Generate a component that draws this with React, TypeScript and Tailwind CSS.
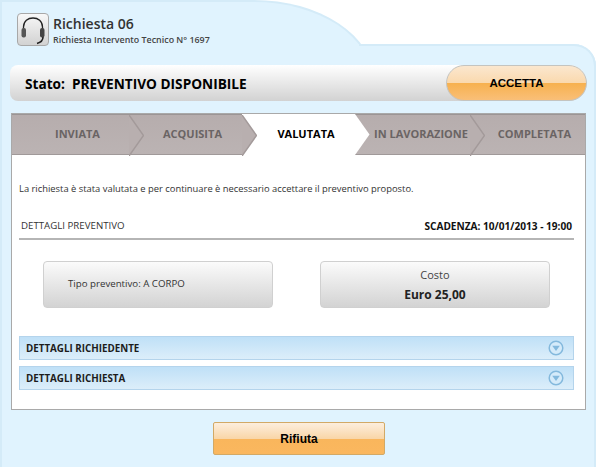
const Headset = () => (
  <svg width="30" height="30" viewBox="0 0 30 30" fill="none">
    <path d="M5.5 16 V12 C5.5 6 10 3 15 3 C20 3 24.5 6 24.5 12 V16" stroke="#222" strokeWidth="1.3" />
    <rect x="3.5" y="13" width="4.5" height="9.5" rx="2" fill="#555" />
    <rect x="22" y="13" width="4.5" height="9.5" rx="2" fill="#444" />
    <path d="M25 22 C25 25.5 22.5 27.5 19 28.5" stroke="#222" strokeWidth="1.6" />
  </svg>
)

const Step = ({ label, width, active, last }: { label: string; width: string; active?: boolean; last?: boolean }) => (
  <div
    className={
      "relative flex h-full items-center justify-center text-[11px] font-bold " +
      width +
      (active
        ? " bg-white text-black"
        : " border-y border-t-[#9b9595] border-b-[#a09999] bg-gradient-to-b from-[#b6adad] to-[#bbb3b3] text-[#6a6464]")
    }
  >
    {label}
    {!last && (
      <svg className="absolute left-full top-0 z-10" width="15" height="41" viewBox="0 0 15 41">
        <polygon points="0,0 14.5,20.5 0,41" fill={active ? "#ffffff" : "#b8afaf"} />
        {!active && <polyline points="0,0 14.5,20.5 0,41" fill="none" stroke="#a39a9a" strokeWidth="1.5" />}
      </svg>
    )}
  </div>
)

const Accordion = ({ title }: { title: string }) => (
  <div className="flex h-[24px] items-center justify-between border border-[#b4d4ec] bg-gradient-to-b from-[#bfe0f7] to-[#dceefa] pl-[6px] pr-[9px] text-[9.8px] font-bold text-[#1c1c1c]">
    <span className="pt-[2px]">{title}</span>
    <svg width="16" height="16" viewBox="0 0 16 16">
      <circle cx="8" cy="8" r="6.8" fill="#d5ebfa" stroke="#84b9dd" strokeWidth="1.5" />
      <polygon points="4.2,5.8 11.8,5.8 8,11" fill="#84b9dd" />
    </svg>
  </div>
)

export default function App() {
  return (
    <div className="h-[467px] w-[596px] overflow-hidden bg-white font-['Open_Sans',sans-serif] text-[#222]">
      <div className="-mb-[36px] flex h-[80px] w-[374px] items-start rounded-tr-[120px_80px] border-l-2 border-r-2 border-t-2 border-[#d4ebf8] bg-[#e0f3fe] pl-[15px] pt-[11px]">
        <div className="relative z-10 flex h-[33px] w-[32px] shrink-0 items-center justify-center rounded-[4px] border border-[#a8a8a8] bg-gradient-to-b from-[#f8f8f8] to-[#d2d2d2]">
          <Headset />
        </div>
        <div className="relative z-10 ml-[4px] pt-[1px]">
          <div className="text-[14px] leading-[19px] font-semibold text-[#333]">Richiesta 06</div>
          <div className="text-[8.9px] leading-[13px] font-semibold text-[#444]">Richiesta Intervento Tecnico N° 1697</div>
        </div>
      </div>

      <div className="relative h-[423px] rounded-tr-[22px] border-x-2 border-[#d4ebf8] bg-[#e0f3fe] pl-[9px] pt-[21px]">
        <div className="absolute left-[357px] -right-[2px] top-0 h-[22px] rounded-tr-[22px] border-r-2 border-t-2 border-[#d4ebf8]"></div>

        <div className="-ml-[1px] flex h-[36px] w-[577px] items-center justify-between rounded-l-[8px] rounded-r-[18px] bg-gradient-to-b from-white to-[#d2d2d2]">
          <div className="pl-[15px] pt-[3px] text-[13.65px] font-bold text-black">Stato:&nbsp; PREVENTIVO DISPONIBILE</div>
          <div className="flex h-[36px] w-[141px] items-center justify-center rounded-[18px] border border-[#c4c4c0] bg-[linear-gradient(#fbe7cf_0%,#fad9ae_49%,#f7b14f_51%,#f9bf78_100%)] pt-[1px] font-['Liberation_Sans',sans-serif] text-[11.5px] font-bold text-black">
            ACCETTA
          </div>
        </div>

        <div className="mt-[12px] h-[297px] w-[575px] border border-[#a9a9a9] bg-white">
          <div className="flex h-[41px]">
            <Step label="INVIATA" width="w-[117px] pl-[14px]" />
            <Step label="ACQUISITA" width="w-[113px] pl-[14px]" />
            <Step label="VALUTATA" width="w-[113px] pl-[15px]" active />
            <Step label="IN LAVORAZIONE" width="w-[115px] pl-[17px]" />
            <Step label="COMPLETATA" width="w-[115px] pl-[14px]" last />
          </div>

          <div className="px-[7px]">
            <p className="mt-[27px] text-[9.4px] leading-[14px] text-[#333]">
              La richiesta è stata valutata e per continuare è necessario accettare il preventivo proposto.
            </p>
            <div className="mt-[23px] flex h-[21px] w-[555px] items-start justify-between border-b-2 border-[#b5b5b5] px-[2px] text-[9.7px] leading-[14px]">
              <span className="text-[#333]">DETTAGLI PREVENTIVO</span>
              <span className="text-[10.1px] font-bold text-[#111]">SCADENZA: 10/01/2013 - 19:00</span>
            </div>

            <div className="mt-[21px] flex pl-[24px]">
              <div className="flex h-[47px] w-[230px] items-center rounded-[4px] border border-[#d0d0d0] bg-gradient-to-b from-[#fbfbfb] to-[#d3d3d3] pl-[24px] text-[9.7px] text-[#333]">
                Tipo preventivo: A CORPO
              </div>
              <div className="ml-[47px] flex h-[47px] w-[230px] flex-col items-center justify-center rounded-[4px] border border-[#d0d0d0] bg-gradient-to-b from-[#fbfbfb] to-[#d3d3d3]">
                <span className="text-[11px] leading-[20px] text-[#444]">Costo</span>
                <span className="text-[12px] leading-[20px] font-bold text-[#222]">Euro 25,00</span>
              </div>
            </div>

            <div className="mt-[28px] flex w-[555px] flex-col gap-[6px]">
              <Accordion title="DETTAGLI RICHIEDENTE" />
              <Accordion title="DETTAGLI RICHIESTA" />
            </div>
          </div>
        </div>

        <div className="ml-[202px] mt-[12px] flex h-[33px] w-[172px] items-center justify-center rounded-[2px] border border-[#d2a966] bg-[linear-gradient(#fdeedd_0%,#f9d6a8_50%,#f9b65c_52%,#fab75f_100%)] font-['Liberation_Sans',sans-serif] text-[12px] font-bold text-black">
          Rifiuta
        </div>
      </div>
    </div>
  )
}
